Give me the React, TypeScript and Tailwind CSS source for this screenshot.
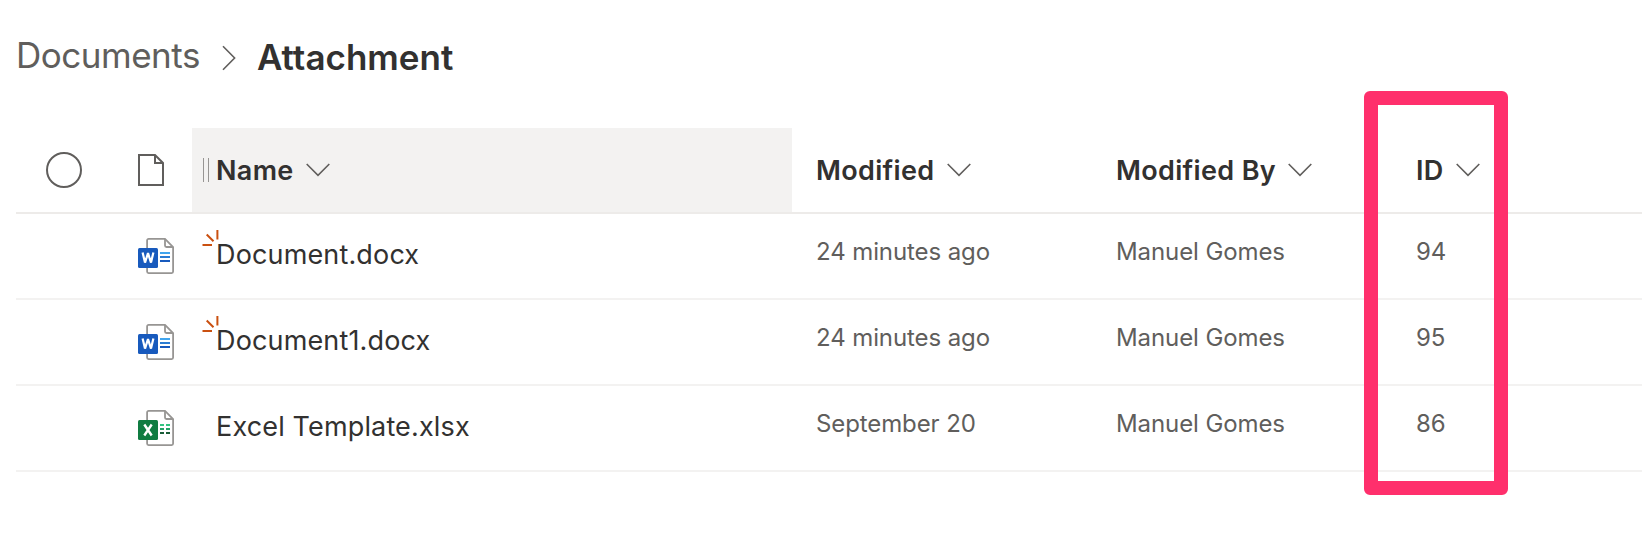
import type { ReactNode } from "react";

type Kind = "word" | "excel";
type Item = {
  name: string;
  kind: Kind;
  isNew: boolean;
  modified: string;
  modifiedBy: string;
  id: number;
};

const items: Item[] = [
  { name: "Document.docx", kind: "word", isNew: true, modified: "24 minutes ago", modifiedBy: "Manuel Gomes", id: 94 },
  { name: "Document1.docx", kind: "word", isNew: true, modified: "24 minutes ago", modifiedBy: "Manuel Gomes", id: 95 },
  { name: "Excel Template.xlsx", kind: "excel", isNew: false, modified: "September 20", modifiedBy: "Manuel Gomes", id: 86 },
];

const gridCls = "grid grid-cols-[96px_80px_600px_300px_300px_1fr]";

function ChevronDown() {
  return (
    <svg width="24" height="14" viewBox="0 0 24 14" fill="none" stroke="#605e5c" strokeWidth="1.6" className="shrink-0">
      <path d="M0.7 1 12 12.3 23.3 1" />
    </svg>
  );
}

function ChevronRight() {
  return (
    <svg width="14" height="26" viewBox="0 0 14 26" fill="none" stroke="#605e5c" strokeWidth="1.6" className="shrink-0">
      <path d="M1 1.3 12.6 13 1 24.7" />
    </svg>
  );
}

function PageIcon() {
  return (
    <svg width="26" height="32" viewBox="0 0 26 32" fill="none" stroke="#605e5c" strokeWidth="2">
      <path d="M1 1H17L25 9V31H1Z" />
      <path d="M17 1V9H25" />
    </svg>
  );
}

function FileIcon({ kind }: { kind: Kind }) {
  return (
    <svg width="36" height="36" viewBox="0 0 36 36" fill="none">
      <path
        d="M10.6 0.9H27L35.1 9V33.6A1.5 1.5 0 0 1 33.6 35.1H10.6A1.5 1.5 0 0 1 9.1 33.6V2.4A1.5 1.5 0 0 1 10.6 0.9Z"
        fill="#fff"
        stroke="#979593"
        strokeWidth="1.8"
      />
      <path d="M27 1V7.5A1.5 1.5 0 0 0 28.5 9H35" stroke="#979593" strokeWidth="1.8" />
      {kind === "word" ? (
        <>
          <path d="M22 15H32" stroke="#41a5ee" strokeWidth="2" />
          <path d="M22 19H32" stroke="#2b7cd3" strokeWidth="2" />
          <path d="M22 23H32" stroke="#185abd" strokeWidth="2" />
          <rect y="10" width="20" height="20" rx="1.5" fill="#185abd" />
          <path d="M4.6 14.5 7 24.6 10 15.2 13 24.6 15.4 14.5" stroke="#fff" strokeWidth="2.2" strokeLinejoin="bevel" />
        </>
      ) : (
        <>
          <path d="M22 15H26M28 15H32" stroke="#33c481" strokeWidth="2" />
          <path d="M22 19H26M28 19H32" stroke="#21a366" strokeWidth="2" />
          <path d="M22 23H26M28 23H32" stroke="#185c37" strokeWidth="2" />
          <rect y="10" width="20" height="20" rx="1.5" fill="#107c41" />
          <path d="M6.3 14.5 13.7 25.5M13.7 14.5 6.3 25.5" stroke="#fff" strokeWidth="2.4" />
        </>
      )}
    </svg>
  );
}

function NewMark() {
  return (
    <svg width="18" height="18" viewBox="0 0 18 18" stroke="#ca5010" strokeWidth="2" className="absolute left-[10px] top-[15px]">
      <path d="M15.4 1V10.5M4.7 5.5 11.5 12.2M0.5 16H10" />
    </svg>
  );
}

function HeaderCell({ children }: { children: ReactNode }) {
  return (
    <div className="flex items-center gap-3 pl-6 text-[27px] leading-9 font-semibold tracking-[0.34px] text-[#323130]">
      <span className="pt-0.5">{children}</span>
      <ChevronDown />
    </div>
  );
}

function Row({ item }: { item: Item }) {
  const cellCls = "pt-[22px] pl-6 text-2xl tracking-[-0.1px] text-[#605e5c]";
  return (
    <div className={`${gridCls} h-[86px] border-b-2 border-[#f3f2f1]`}>
      <div />
      <div className="pt-6 pl-[26px]">
        <FileIcon kind={item.kind} />
      </div>
      <div className="relative pt-[23px] pl-6 text-[27px] leading-9 tracking-[0.15px] text-[#323130]">
        {item.isNew && <NewMark />}
        {item.name}
      </div>
      <div className={cellCls}>{item.modified}</div>
      <div className={cellCls}>{item.modifiedBy}</div>
      <div className={cellCls}>{item.id}</div>
    </div>
  );
}

export default function App() {
  return (
    <div className="relative h-[540px] overflow-hidden bg-white pl-4 font-['Inter','Liberation_Sans',sans-serif]">
      <nav className="flex h-32 items-start pt-[31px] text-[35px] leading-[48px]">
        <span className="w-[206px] tracking-[-0.48px] text-[#605e5c]">Documents</span>
        <span className="mt-[14px] mr-[21px]">
          <ChevronRight />
        </span>
        <span className="mt-0.5 font-semibold text-[#323130]">Attachment</span>
      </nav>

      <div className={`${gridCls} h-[86px] border-b-2 border-[#edebe9]`}>
        <div className="flex items-center pl-[30px]">
          <span className="size-9 rounded-full border-2 border-[#605e5c]" />
        </div>
        <div className="flex items-center pl-[26px]">
          <PageIcon />
        </div>
        <div className="relative flex bg-[#f3f2f1]">
          <span className="absolute top-[30px] left-[11px] h-6 w-1.5 border-x border-[#979593]" />
          <HeaderCell>Name</HeaderCell>
        </div>
        <HeaderCell>Modified</HeaderCell>
        <HeaderCell>Modified By</HeaderCell>
        <HeaderCell>ID</HeaderCell>
      </div>
      {items.map((item) => (
        <Row key={item.id} item={item} />
      ))}

      {/* highlight around the ID column */}
      <div className="absolute top-[91px] left-[1364px] h-[404px] w-36 rounded-md border-14 border-[#ff2f6c]" />
    </div>
  );
}
